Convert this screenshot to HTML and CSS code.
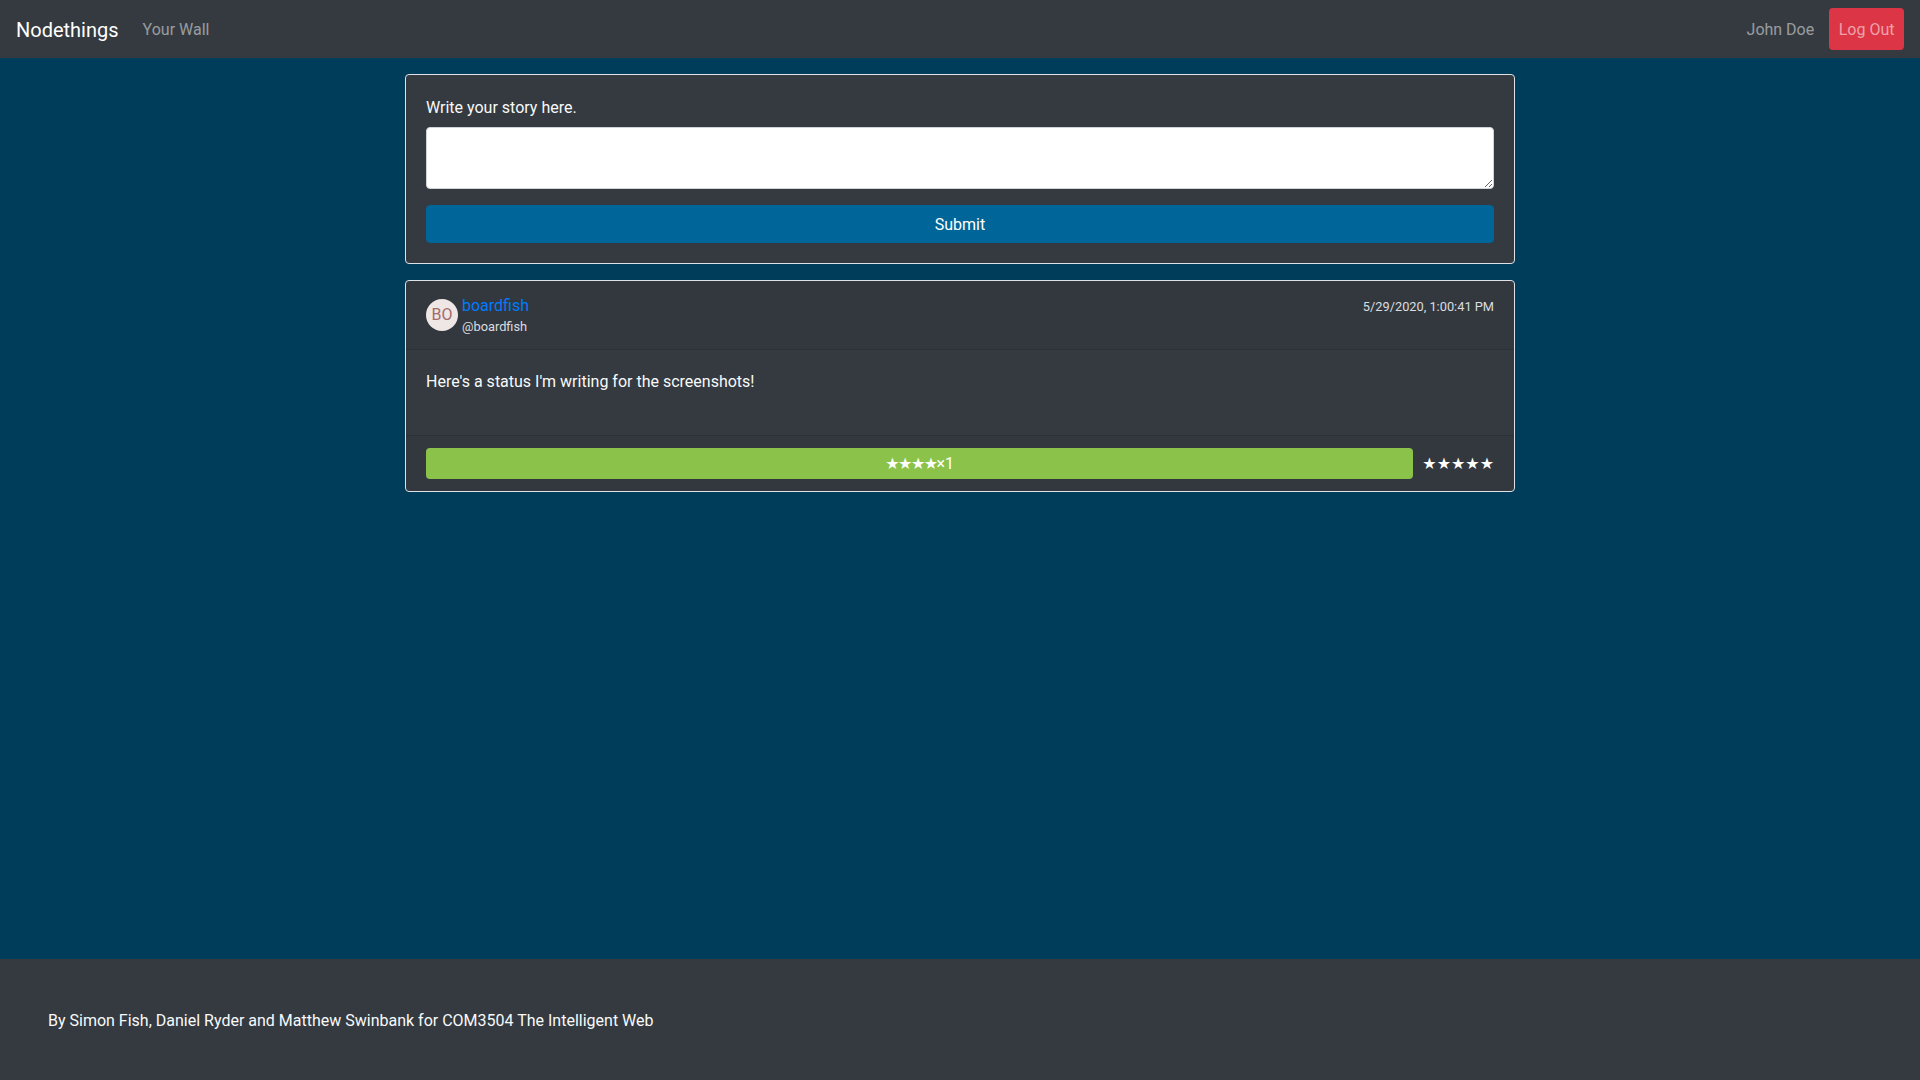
FILE: index.html
```html
<!DOCTYPE html>
<html lang="en">
<head>
<meta charset="utf-8">
<title>Nodethings</title>
<link rel="stylesheet" href="styles.css">
</head>
<body>
<nav class="navbar">
  <div class="nav-left">
    <a class="brand" href="#">Nodethings</a>
    <a class="nav-link" href="#">Your Wall</a>
  </div>
  <div class="nav-right">
    <a class="nav-link user" href="#">John Doe</a>
    <a class="nav-link logout" href="#">Log Out</a>
  </div>
</nav>
<main class="main">
  <div class="container">
    <form class="card">
      <div class="card-body compose">
        <label class="label" for="story">Write your story here.</label>
        <textarea id="story" class="textarea" rows="2"></textarea>
        <button type="button" class="btn-submit">Submit</button>
      </div>
    </form>
    <article class="card post">
      <header class="post-header">
        <div class="avatar">BO</div>
        <div class="post-meta">
          <div class="meta-row">
            <a class="author" href="#">boardfish</a>
            <span class="date">5/29/2020, 1:00:41 PM</span>
          </div>
          <div class="handle">@boardfish</div>
        </div>
      </header>
      <div class="post-body">
        <p class="post-text">Here's a status I'm writing for the screenshots!</p>
      </div>
      <footer class="post-footer">
        <div class="rating-bar"><span class="bar-stars">★★★★</span>×1</div>
        <div class="rate-stars">★★★★★</div>
      </footer>
    </article>
  </div>
</main>
<footer class="site-footer">
  By Simon Fish, Daniel Ryder and Matthew Swinbank for COM3504 The Intelligent Web
</footer>
</body>
</html>
```
FILE: styles.css
```css
* { box-sizing: border-box; }
html, body { margin: 0; padding: 0; }
body {
  min-height: 100vh;
  display: flex;
  flex-direction: column;
  background: #003d5b;
  font-family: Roboto, "Liberation Sans", "DejaVu Sans", sans-serif;
  font-size: 16px;
  line-height: 1.5;
  color: #f8f9fa;
}
a { text-decoration: none; }

.navbar {
  height: 58px;
  background: #343a40;
  padding: 0 16px;
  display: flex;
  align-items: center;
  justify-content: space-between;
}
.nav-left, .nav-right { display: flex; align-items: center; }
.brand {
  font-size: 20px;
  line-height: 30px;
  padding-top: 1px;
  color: #fff;
  margin-right: 16px;
}
.nav-link {
  color: rgba(255,255,255,.5);
  padding: 9px 8px 7px;
  line-height: 24px;
}
.user { margin-right: 7px; }
.logout {
  background: #dc3545;
  border-radius: 4px;
  padding: 10px 9.5px 8px;
  color: rgba(255,255,255,.55);
}

.main { flex: 1; }
.container {
  width: 1140px;
  margin: 0 auto;
  padding: 16px 15px 0;
  display: flex;
  flex-direction: column;
  gap: 16px;
}
.card {
  margin: 0;
  background: #343a40;
  border: 1px solid #dee2e6;
  border-radius: 4px;
}
.compose {
  padding: 20px;
  display: flex;
  flex-direction: column;
}
.label {
  display: block;
  padding-top: 1px;
  margin-bottom: 7px;
}
.textarea {
  display: block;
  width: 100%;
  height: 62px;
  padding: 6px 12px;
  border: 1px solid #ced4da;
  border-radius: 4px;
  background: #fff;
  font-family: inherit;
  font-size: 16px;
  line-height: 1.5;
  margin: 0 0 16px;
}
.btn-submit {
  height: 38px;
  width: 100%;
  border: 1px solid #006699;
  border-radius: 4px;
  background: #006699;
  color: #fff;
  font-family: inherit;
  font-size: 16px;
  line-height: 24px;
  padding: 7px 12px 5px;
}

.post-header {
  display: flex;
  align-items: center;
  padding: 12px 20px;
  background: rgba(0,0,0,.03);
  border-bottom: 1px solid rgba(0,0,0,.125);
}
.avatar {
  width: 32px;
  height: 32px;
  border-radius: 50%;
  background: #efe6e6;
  color: #a36b6b;
  font-size: 16px;
  line-height: 32px;
  text-align: center;
  margin-right: 4px;
  flex: none;
}
.post-meta { flex: 1; }
.meta-row {
  display: flex;
  justify-content: space-between;
  align-items: baseline;
  padding-top: 1px;
}
.author { color: #007bff; line-height: 24px; }
.date, .handle {
  font-size: 12.8px;
  line-height: 19.5px;
  color: #dadde0;
}
.handle { margin-top: -1px; }
.post-body {
  padding: 20px 20px 25px;
}
.post-text { margin: 0 0 16px; }
.post-footer {
  display: flex;
  align-items: center;
  gap: 9px;
  padding: 12px 20px;
  background: rgba(0,0,0,.03);
  border-top: 1px solid rgba(0,0,0,.125);
}
.rating-bar {
  flex: 1;
  height: 31px;
  line-height: 31px;
  background: #8bc34a;
  border-radius: 4px;
  text-align: center;
  color: #fff;
  font-size: 16px;
}
.bar-stars {
  font-family: "DejaVu Sans", sans-serif;
  letter-spacing: -1.5px;
}
.rate-stars {
  color: #fff;
  font-family: "DejaVu Sans", sans-serif;
  font-size: 16px;
  line-height: 24px;
  padding-top: 1px;
}

.site-footer {
  background: #343a40;
  padding: 50px 48px 46px;
  height: 121px;
  line-height: 24px;
  color: #f8f9fa;
}
```
